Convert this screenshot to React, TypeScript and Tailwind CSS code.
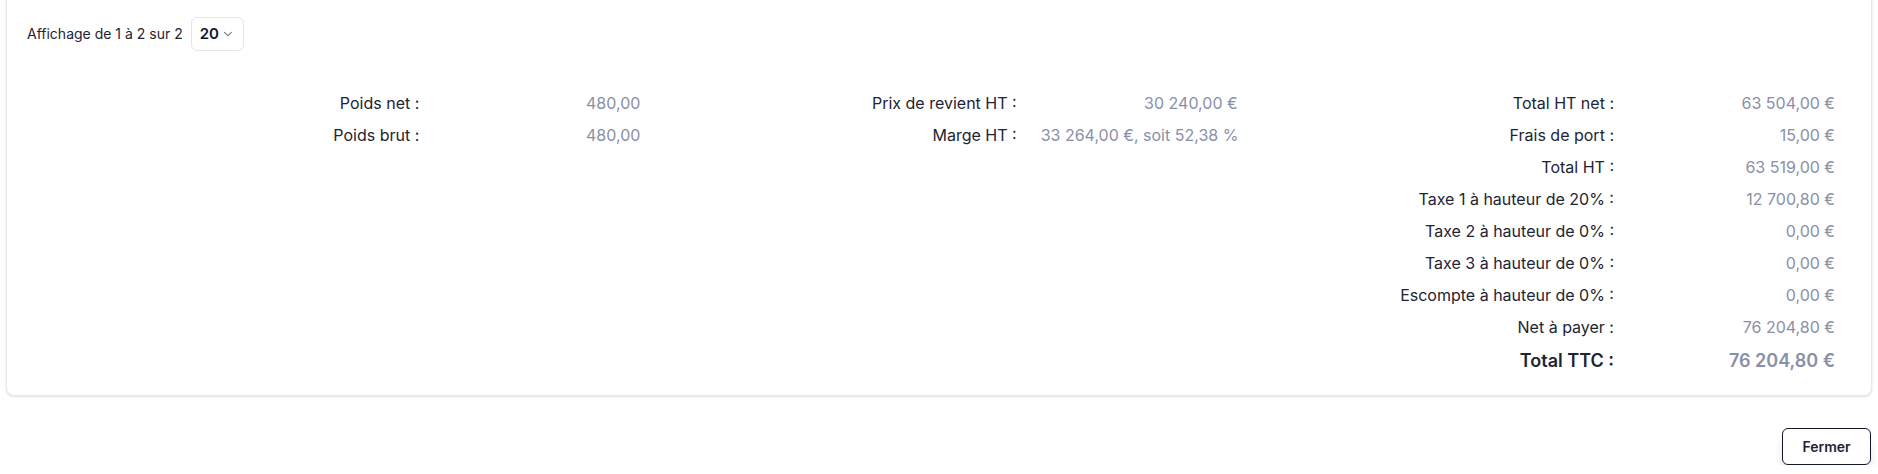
import { ChevronDown } from 'lucide-react';

interface Line {
  label: string;
  value: string;
  strong?: boolean;
}

const weights: Line[] = [
  { label: 'Poids net :', value: '480,00' },
  { label: 'Poids brut :', value: '480,00' },
];

const costs: Line[] = [
  { label: 'Prix de revient HT :', value: '30 240,00 €' },
  { label: 'Marge HT :', value: '33 264,00 €, soit 52,38 %' },
];

const totals: Line[] = [
  { label: 'Total HT net :', value: '63 504,00 €' },
  { label: 'Frais de port :', value: '15,00 €' },
  { label: 'Total HT :', value: '63 519,00 €' },
  { label: 'Taxe 1 à hauteur de 20% :', value: '12 700,80 €' },
  { label: 'Taxe 2 à hauteur de 0% :', value: '0,00 €' },
  { label: 'Taxe 3 à hauteur de 0% :', value: '0,00 €' },
  { label: 'Escompte à hauteur de 0% :', value: '0,00 €' },
  { label: 'Net à payer :', value: '76 204,80 €' },
  { label: 'Total TTC :', value: '76 204,80 €', strong: true },
];

function SummaryColumn({ lines }: { lines: Line[] }) {
  return (
    <div className="flex flex-col gap-2">
      {lines.map((line) => (
        <div
          key={line.label}
          className={
            line.strong
              ? 'flex items-center justify-end gap-6 text-lg leading-7 font-semibold'
              : 'flex items-center justify-end gap-6 text-base leading-6'
          }
        >
          <span className="flex-1 text-right whitespace-nowrap text-[#1e2433]">{line.label}</span>
          <span className="w-[197px] text-right whitespace-nowrap text-[#8a8fa8]">{line.value}</span>
        </div>
      ))}
    </div>
  );
}

export default function App() {
  return (
    <div className="min-h-screen bg-white px-[6px] font-['Inter',sans-serif] text-[#1e2433]">
      <div className="-mt-[10px] rounded-lg border border-[#e6e7eb] bg-white px-5 pt-[26px] pb-5 shadow-sm">
        <div className="flex h-[34px] items-center gap-2 text-sm">
          <span>Affichage de 1 à 2 sur 2</span>
          <button className="flex h-[34px] w-[53px] items-center gap-0.5 rounded-md border border-[#e2e5ec] bg-white px-2 text-[15px] font-semibold text-[#111827]">
            20
            <ChevronDown size={14} strokeWidth={1.75} className="text-[#6b7280]" />
          </button>
        </div>

        <div className="mt-10 grid grid-cols-3 px-4">
          <SummaryColumn lines={weights} />
          <SummaryColumn lines={costs} />
          <SummaryColumn lines={totals} />
        </div>
      </div>

      <div className="mt-8 flex justify-end pr-px">
        <button className="h-[37px] w-[89px] rounded-md border border-[#111827] bg-white text-sm font-semibold text-[#1e2433] shadow-[0_10px_14px_-6px_rgba(0,0,0,0.3)]">
          Fermer
        </button>
      </div>
    </div>
  );
}
